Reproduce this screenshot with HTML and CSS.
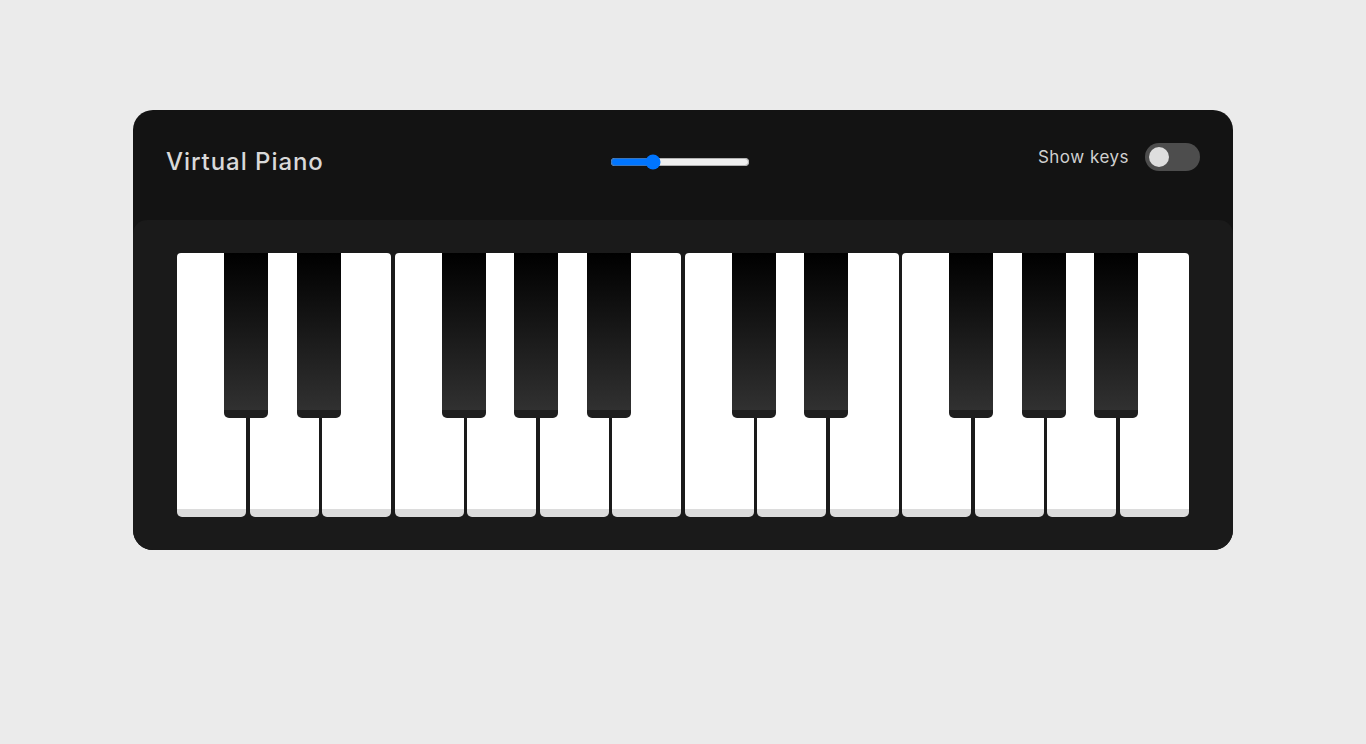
FILE: index.html
```html
<!DOCTYPE html>
<html lang="en">
<head>
<meta charset="utf-8">
<title>Virtual Piano</title>
<link rel="stylesheet" href="styles.css">
</head>
<body>
<div class="wrapper">
  <header class="header">
    <h2 class="title">Virtual Piano</h2>
    <div class="volume">
      <input class="slider" type="range" min="0" max="100" value="28">
    </div>
    <div class="keys-toggle">
      <span class="label">Show keys</span>
      <span class="switch"><span class="knob"></span></span>
    </div>
  </header>
  <div class="piano">
    <ul class="keys">
      <li class="white"><span class="black"></span></li>
      <li class="white"><span class="black"></span></li>
      <li class="white"></li>
      <li class="white"><span class="black"></span></li>
      <li class="white"><span class="black"></span></li>
      <li class="white"><span class="black"></span></li>
      <li class="white"></li>
      <li class="white"><span class="black"></span></li>
      <li class="white"><span class="black"></span></li>
      <li class="white"></li>
      <li class="white"><span class="black"></span></li>
      <li class="white"><span class="black"></span></li>
      <li class="white"><span class="black"></span></li>
      <li class="white"></li>
    </ul>
  </div>
</div>
</body>
</html>
```

FILE: styles.css
```css
* {
  box-sizing: border-box;
  margin: 0;
  padding: 0;
}

body {
  background: #ebebeb;
  font-family: "Inter", "Open Sans", sans-serif;
  padding-top: 110px;
  min-height: 744px;
}

.wrapper {
  width: 1100px;
  margin: 0 auto;
  background: #131313;
  border-radius: 20px;
}

.header {
  height: 110px;
  padding: 0 33px 8px;
  display: flex;
  align-items: center;
  justify-content: space-between;
}

.title {
  width: 157px;
  font-size: 24px;
  font-weight: 500;
  color: #d9d9d9;
  letter-spacing: 0.95px;
  white-space: nowrap;
}

.volume {
  display: flex;
  align-items: center;
  margin-top: 2px;
}

.slider {
  width: 140px;
  margin: 0;
}

.keys-toggle {
  display: flex;
  align-items: center;
  gap: 16px;
  margin-top: -8px;
}

.label {
  font-size: 17px;
  font-weight: 400;
  color: #d0d0d0;
  letter-spacing: 0.5px;
}

.switch {
  width: 55px;
  height: 28px;
  border-radius: 14px;
  background: #4d4d4d;
  display: flex;
  align-items: center;
  padding-left: 4px;
}

.knob {
  width: 20px;
  height: 20px;
  border-radius: 50%;
  background: #dedede;
}

.piano {
  height: 330px;
  padding: 33px 44px;
  background: #1a1a1a;
  border-radius: 14px 14px 20px 20px;
}

.keys {
  list-style: none;
  display: flex;
  justify-content: space-between;
  height: 264px;
}

.white {
  position: relative;
  width: 69px;
  height: 264px;
  border-radius: 4px 4px 5px 5px;
  background: linear-gradient(#ffffff calc(100% - 8px), #dcdcdc 0);
}

.black {
  position: absolute;
  z-index: 2;
  top: 0;
  right: -22px;
  width: 44px;
  height: 165px;
  border-radius: 0 0 5px 5px;
  background:
    linear-gradient(#1f1f1f, #1f1f1f) bottom / 100% 8px no-repeat,
    linear-gradient(#000000, #333333);
}
```
